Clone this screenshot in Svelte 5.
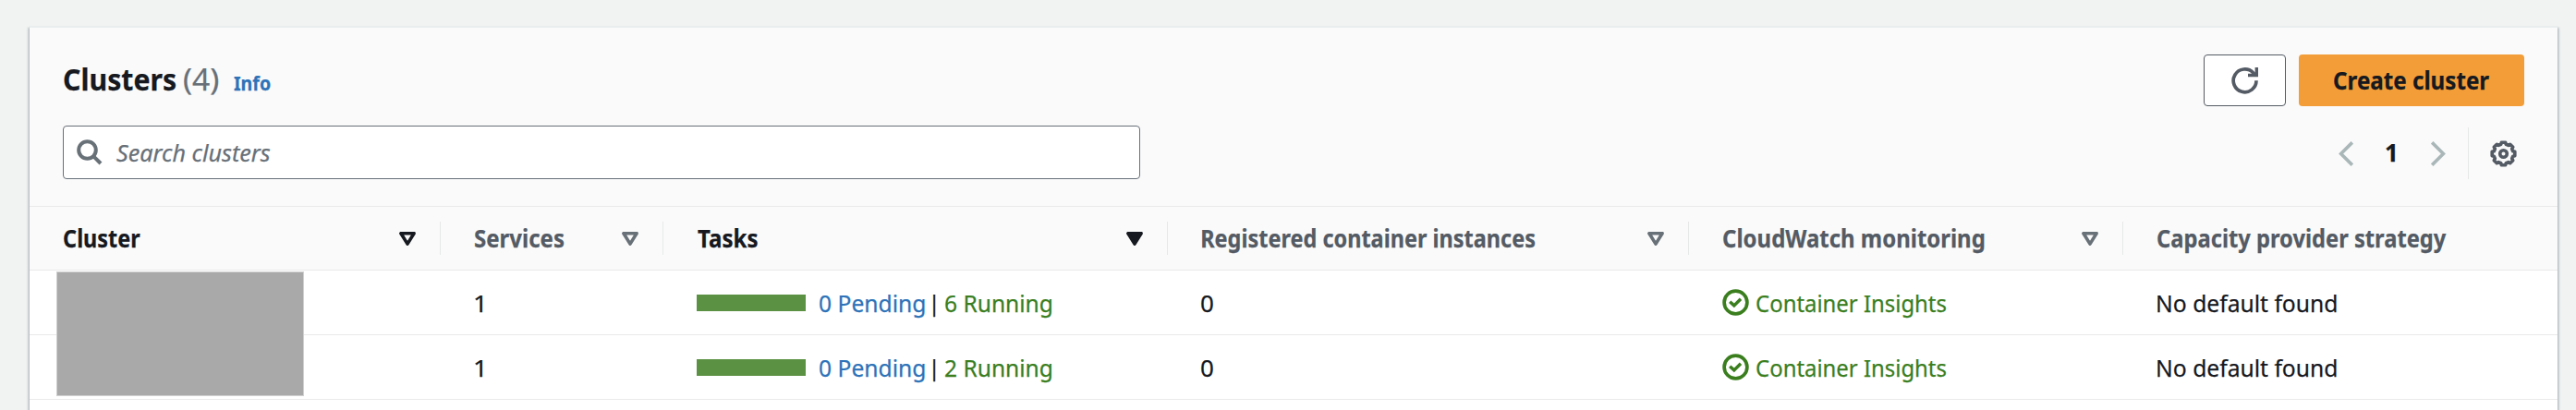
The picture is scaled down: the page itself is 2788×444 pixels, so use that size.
<script>
  const columns = [
    { label: 'Cluster', w: 83, sort: 'outline', active: true },
    { label: 'Services', w: 96, sort: 'outline' },
    { label: 'Tasks', w: 64.5, sort: 'filled', active: true },
    { label: 'Registered container instances', w: 360, sort: 'outline' },
    { label: 'CloudWatch monitoring', w: 282.5, sort: 'outline' },
    { label: 'Capacity provider strategy', w: 312.5 }
  ];
  const rows = [
    { services: 1, pending: 0, running: 6, instances: 0 },
    { services: 1, pending: 0, running: 2, instances: 0 }
  ];

  // Scales a label horizontally so its glyphs span exactly the given width.
  function fit(node, width) {
    const cs = getComputedStyle(node);
    const ctx = document.createElement('canvas').getContext('2d');
    ctx.font = `${cs.fontStyle} ${cs.fontWeight} ${cs.fontSize} ${cs.fontFamily}`;
    const m = ctx.measureText(node.textContent);
    const k = width / (m.actualBoundingBoxLeft + m.actualBoundingBoxRight);
    node.style.transform = `translateX(${m.actualBoundingBoxLeft * k}px) scaleX(${k})`;
  }

  // Eight-toothed gear outline centred on 14.5, 14.5.
  const gear = (() => {
    const pts = [];
    for (let i = 0; i < 8; i++) {
      for (const [r, d] of [[10.6, -15], [12.5, -10], [12.5, 10], [10.6, 15]]) {
        const a = ((i * 45 + d) * Math.PI) / 180;
        pts.push(`${(14.5 + r * Math.cos(a)).toFixed(2)} ${(14.5 + r * Math.sin(a)).toFixed(2)}`);
      }
    }
    return 'M' + pts.join('L') + 'Z';
  })();
</script>

{#snippet label(text, w)}
  <span class="label" style="width:{w}px"><span class="ink" use:fit={w}>{text}</span></span>
{/snippet}

<main>
  <section class="panel">
    <header>
      <div class="top">
        <h2>
          <span class="title">{@render label('Clusters', 121)}</span>
          <span class="count">{@render label('(4)', 37.5)}</span>
          <span class="info">{@render label('Info', 40)}</span>
        </h2>
        <div class="actions">
          <button class="refresh" aria-label="Refresh">
            <svg width="29" height="29" viewBox="0 0 29 29" fill="none" stroke="#545b64" stroke-width="3.7">
              <path d="M27 14.2A12.4 12.4 0 1 1 23.6 5.8L26 8.2" />
              <path d="M27.3 0V8.5H18" stroke-width="3.4" />
            </svg>
          </button>
          <button class="create">{@render label('Create cluster', 168.5)}</button>
        </div>
      </div>
      <div class="tools">
        <div class="search">
          <svg width="28" height="28" viewBox="0 0 28 28" fill="none" stroke="#687078" stroke-width="4">
            <circle cx="11.5" cy="11.5" r="9.3" />
            <path d="M17.8 17.8L26 26" />
          </svg>
          {@render label('Search clusters', 166.5)}
        </div>
        <div class="pager">
          <svg width="16" height="27" viewBox="0 0 16 27" fill="none" stroke="#aab7b8" stroke-width="3.6"><path d="M14.8 1.3L2.6 13.5L14.8 25.7" /></svg>
          <span class="page">{@render label('1', 10)}</span>
          <svg width="16" height="27" viewBox="0 0 16 27" fill="none" stroke="#aab7b8" stroke-width="3.6"><path d="M1.2 1.3L13.4 13.5L1.2 25.7" /></svg>
          <i class="divider"></i>
          <svg width="29" height="29" viewBox="0 0 29 29" fill="none" stroke="#545b64" stroke-width="3.6" stroke-linejoin="round">
            <path d={gear} />
            <circle cx="14.5" cy="14.5" r="3.8" />
          </svg>
        </div>
      </div>
    </header>

    <div class="grid thead">
      {#each columns as c}
        <div class="th" class:active={c.active}>
          {@render label(c.label, c.w)}
          {#if c.sort}
            <svg class="sort" class:solid={c.sort === 'filled'} width="18" height="15" viewBox="0 0 18 15">
              <path d="M1.9 1.7H16.1L9 13.1Z" />
            </svg>
            <i class="sep"></i>
          {/if}
        </div>
      {/each}
    </div>

    <div class="body">
      {#each rows as r}
        <div class="grid tr">
          <div></div>
          <div class="td num">{@render label(r.services, 8.5)}</div>
          <div class="td">
            <i class="bar"></i>
            <span class="pending">{@render label(`${r.pending} Pending`, 113.5)}</span>
            <span class="pipe">{@render label('|', 3)}</span>
            <span class="running">{@render label(`${r.running} Running`, 115)}</span>
          </div>
          <div class="td">{@render label(r.instances, 13)}</div>
          <div class="td ok">
            <svg width="29" height="29" viewBox="0 0 29 29" fill="none" stroke="currentColor" stroke-width="3.7">
              <circle cx="14.5" cy="14.5" r="12.4" />
              <path d="M8.2 13.7L12.8 17.9L20 10.8" stroke-width="3.5" />
            </svg>
            {@render label('Container Insights', 205.5)}
          </div>
          <div class="td last">{@render label('No default found', 193.5)}</div>
        </div>
      {/each}
      <div class="mask"></div>
    </div>
  </section>
</main>

<style>
  :global(body) { background: #f1f3f3; overflow: hidden; }
  main {
    box-sizing: border-box;
    height: 444px;
    padding: 28px 20px 0 32px;
    overflow: hidden;
    background: #f1f3f3;
    color: #16191f;
    font: 26px/36px "Noto Sans", sans-serif;
  }
  svg { display: block; flex: none; }
  i { flex: none; }
  .label { display: inline-block; white-space: nowrap; flex: none; }
  .ink { display: inline-block; transform-origin: 0 50%; -webkit-text-stroke: .25px currentColor; }
  .panel {
    box-sizing: border-box;
    height: 440px;
    border-top: 2px solid #eaeded;
    background: #fff;
    box-shadow: 0 2px 2px rgba(0, 28, 36, .3), 2px 2px 2px rgba(0, 28, 36, .15), -2px 2px 2px rgba(0, 28, 36, .15);
  }
  header {
    display: flex;
    flex-direction: column;
    gap: 21px;
    box-sizing: border-box;
    height: 194px;
    padding: 29px 36px 0;
    background: #fafafa;
    border-bottom: 1px solid #eaeaea;
  }
  .top, .tools { display: flex; justify-content: space-between; align-items: center; }
  .top { height: 56px; }
  .tools { height: 58px; }
  h2 { display: flex; align-items: baseline; margin: 0; padding: 1px 0 0 1px; font: inherit; }
  .title { font-size: 32.5px; font-weight: 700; }
  .count { margin-left: 9px; font-size: 32.5px; color: #687078; }
  .info { margin-left: 16px; font-size: 21px; font-weight: 700; color: #2e73b8; }
  .actions { display: flex; gap: 14px; }
  button { box-sizing: border-box; height: 56px; padding: 0; border-radius: 4px; color: #16191f; font: inherit; display: flex; justify-content: center; align-items: center; }
  .refresh { width: 89px; background: #fff; border: 1px solid #545b64; }
  .create { width: 244px; padding-bottom: 1px; background: #f29d38; border: 0; font-weight: 700; }
  .search {
    display: flex;
    align-items: center;
    gap: 15px;
    box-sizing: border-box;
    width: 1166px;
    height: 58px;
    padding-left: 14px;
    background: #fff;
    border: 1px solid #687078;
    border-radius: 4px;
    color: #687078;
    font-style: italic;
  }
  .pager { display: flex; align-items: center; height: 56px; padding: 2px 8px 0 0; }
  .page { margin: 0 39px 2px 35px; font-weight: 700; }
  .divider { width: 1px; height: 56px; margin: 0 23px 0 24px; background: #e6e8e8; }
  .grid { display: grid; grid-template-columns: 445px 241px 546px 564px 470px 1fr; }
  .thead { box-sizing: border-box; height: 69px; background: #fafafa; border-bottom: 1px solid #eaeaea; }
  .th { display: flex; align-items: center; padding-left: 36.5px; color: #545b64; font-weight: 700; }
  .th .label { padding-bottom: 1px; }
  .active { color: #16191f; }
  .sort { margin: 0 26px 0 auto; fill: none; stroke: #687078; stroke-width: 3.6; stroke-linejoin: round; }
  .active .sort { stroke: #16191f; }
  .solid { fill: #16191f; }
  .active .solid { fill: #16191f; }
  .sep { width: 1px; height: 36px; background: #e6e8e8; }
  .body { position: relative; }
  .tr { box-sizing: border-box; height: 70px; border-bottom: 1px solid #eaeaea; }
  .td { display: flex; align-items: center; padding: 0 0 0 36px; }
  .num { padding-left: 37px; }
  .last { padding-left: 37px; }
  .bar { width: 118px; height: 18px; margin: 1px 15px 0 0; background: #5b9142; }
  .pending { color: #2e73b8; }
  .pipe { margin: 0 10px 0 9px; font-size: 24px; }
  .running { color: #3a7e1e; }
  .ok { gap: 8px; color: #3a7e1e; }
  .mask { position: absolute; left: 29px; top: 1px; box-sizing: border-box; width: 268px; height: 135px; background: #a9a9a9; border: 1px solid #d0d0d0; }
</style>
